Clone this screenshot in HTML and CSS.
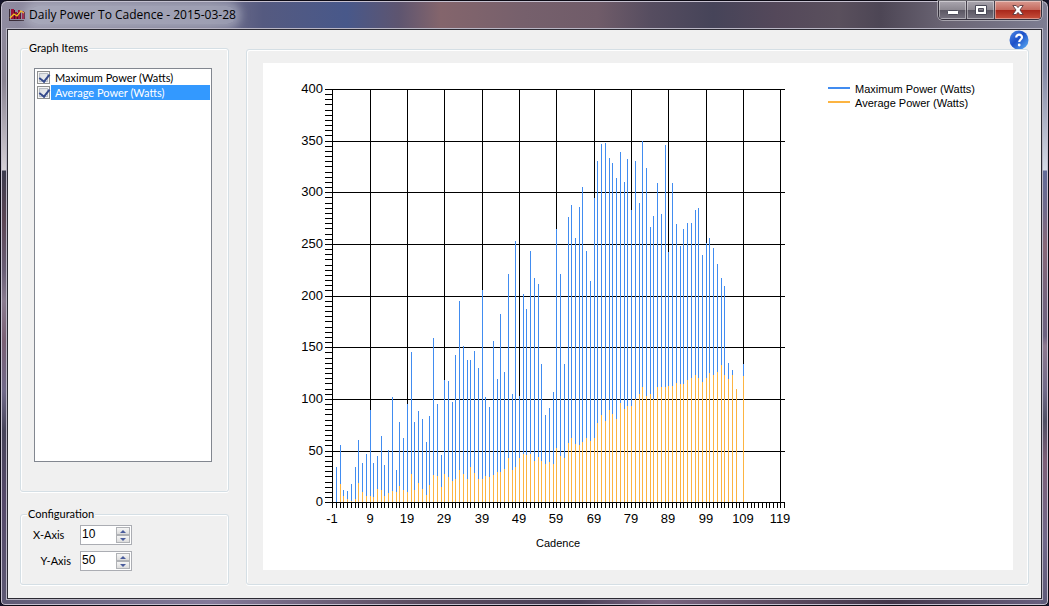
FILE: index.html
```html
<!DOCTYPE html>
<html lang="en">
<head>
    <meta charset="UTF-8">
    <title>Daily Power To Cadence - 2015-03-28</title>
    <link rel="stylesheet" href="styles.css">
</head>
<body>
    <div class="window">
        <header class="titlebar">
            <svg class="app-icon" width="16" height="16" viewBox="0 0 16 16" shape-rendering="crispEdges">
                <path d="M0 2h1v11h14v1H0z" fill="#3a2c38"/>
                <path d="M2 2h3v10H2zM6 5h2v7H6zM9 3h2v9H9zM13 4h2v8h-2z" fill="#9c1038"/>
                <path d="M5 3h1v9H5zM8 6h1v6H8zM11 4h1v8h-1zM15 5h1v7h-1z" fill="#4a0c20"/>
                <path d="M1 11l4-4 3 2 4-5 3 2" fill="none" stroke="#f4c020" stroke-width="1.300" shape-rendering="auto"/>
            </svg>
            <h1 class="title">Daily Power To Cadence - 2015-03-28</h1>
            <div class="controls">
                <button class="control" aria-label="Minimize">
                    <svg width="12" height="12" viewBox="0 0 12 12"><rect x="0.5" y="6.500" width="11" height="4" rx="1" fill="#fff" stroke="#4a4a58"/></svg>
                </button>
                <button class="control" aria-label="Maximize">
                    <svg width="12" height="12" viewBox="0 0 12 12"><path d="M.5 1.500h11v9H.5zM3.500 4.500v3h5v-3z" fill="#fff" stroke="#4a4a58" fill-rule="evenodd"/></svg>
                </button>
                <button class="control control-close" aria-label="Close">
                    <svg width="12" height="12" viewBox="0 0 12 12"><path d="M.8 1.500h3.400L6 3.600l1.800-2.100h3.400L8 6l3.200 4.500H7.800L6 8.400l-1.800 2.100H.8L4 6z" fill="#fff" stroke="#5b3a40" stroke-width=".9"/></svg>
                </button>
            </div>
        </header>

        <main class="client">
            <div class="sidebar">
                <fieldset class="group group-items">
                    <legend>Graph Items</legend>
                    <div class="list">
                        <label class="list-item"><input type="checkbox" checked><span>Maximum Power (Watts)</span></label>
                        <label class="list-item selected"><input type="checkbox" checked><span>Average Power (Watts)</span></label>
                    </div>
                </fieldset>

                <fieldset class="group group-config">
                    <legend>Configuration</legend>
                    <div class="field">
                        <label for="xAxis">X-Axis</label>
                        <div class="spinner">
                            <input type="number" id="xAxis" value="10">
                            <div class="spinner-buttons">
                                <button class="up" aria-label="Increase X-Axis" onclick="xAxis.stepUp()"></button>
                                <button class="down" aria-label="Decrease X-Axis" onclick="xAxis.stepDown()"></button>
                            </div>
                        </div>
                    </div>
                    <div class="field field-end">
                        <label for="yAxis">Y-Axis</label>
                        <div class="spinner">
                            <input type="number" id="yAxis" value="50">
                            <div class="spinner-buttons">
                                <button class="up" aria-label="Increase Y-Axis" onclick="yAxis.stepUp()"></button>
                                <button class="down" aria-label="Decrease Y-Axis" onclick="yAxis.stepDown()"></button>
                            </div>
                        </div>
                    </div>
                </fieldset>
            </div>

            <div class="content">
                <button class="help" aria-label="Help">
                    <svg width="20" height="20" viewBox="0 0 20 20">
                        <defs>
                            <linearGradient id="helpFill" x1="0" y1="0" x2="1" y2="1">
                                <stop offset="0" stop-color="#4d8ae8"/>
                                <stop offset=".45" stop-color="#1c50c8"/>
                                <stop offset="1" stop-color="#62b4f8"/>
                            </linearGradient>
                        </defs>
                        <circle cx="10" cy="10" r="9.500" fill="url(#helpFill)"/>
                        <path d="M7.200 7.400C7.200 3.700 13.100 3.800 13 7.300 13 9.500 10.200 9.600 10.200 12.100" fill="none" stroke="#fff" stroke-width="2.200"/>
                        <circle cx="10.200" cy="15" r="1.400" fill="#fff"/>
                    </svg>
                </button>
                <div class="panel">
                    <svg class="chart" id="chart" viewBox="0 0 750 507" shape-rendering="crispEdges" role="img" aria-label="Power by cadence"></svg>
                </div>
            </div>
        </main>
    </div>
    <script src="chart.js"></script>
</body>
</html>
```
FILE: styles.css
```css
* {
    box-sizing: border-box;
}
body {
    margin: 0;
    min-height: 100vh;
    display: flex;
    background: #14142a;
    font-family: Lato, "Liberation Sans", Arial, sans-serif;
    font-size: 11px;
    line-height: 16px;
    color: #000;
}
button {
    padding: 0;
    border: none;
    background: none;
}

/* window frame */
.window {
    flex: 1;
    display: flex;
    flex-direction: column;
    padding: 0 6px 6px;
    border: 1px solid #0c0a14;
    border-radius: 7px 7px 5px 5px;
    box-shadow: inset 0 0 0 1px #c5c0cf;
    background:
        linear-gradient(90deg, #8f8ba0 0, #77758f 20%, #555a80 25%, #48588a 33%, #5e5570 38%, #84656c 42%, #76606c 50%, #705c69 57%, #564d60 62%, #464459 68%, #54485a 74%, #5a505d 80%, #4d4655 84%, #6a6473 90%, #7d7d92 100%) top / 100% 29px no-repeat,
        linear-gradient(180deg, #8f8ba0 0, #8a8492 80px, #d5d0d6 169px, #3c3c4e 170px, #5c4654 220px, #6a5f76 270px, #8a7c90 300px, #7a6074 340px, #716a8a 390px, #47445a 430px, #55496a 500px, #5e5a74 100%) left / 7px 100% no-repeat,
        linear-gradient(180deg, #7d7d92 0, #858aa5 70px, #d5dae6 169px, #636c98 170px, #706a8a 210px, #886878 245px, #74647e 300px, #6c6280 335px, #8e7a90 345px, #706a88 390px, #505064 420px, #7e6078 460px, #70688a 540px, #5e5a78 100%) right / 7px 100% no-repeat,
        linear-gradient(90deg, #5e5a74, #857a9a 20%, #5c4c60 40%, #4b4058 55%, #7a6480 63%, #5e4c62 74%, #44364a 85%, #6a6080);
}
.titlebar {
    flex: none;
    height: 28px;
    display: flex;
    align-items: center;
    gap: 4px;
    padding-left: 2px;
}
.app-icon {
    flex: none;
}
.title {
    margin: 0;
    font: 12px/18px "Open Sans", "Noto Sans", sans-serif;
    border-radius: 9px;
    background: rgba(190, 193, 208, .55);
    box-shadow: 0 0 8px 5px rgba(190, 193, 208, .55);
    white-space: nowrap;
}
.controls {
    display: flex;
    align-self: flex-start;
    margin-left: auto;
    border: 1px solid #34303c;
    border-top: none;
    border-radius: 0 0 5px 5px;
    box-shadow: 0 0 0 1px rgba(255, 255, 255, .4);
    overflow: hidden;
}
.control {
    width: 28px;
    height: 18px;
    display: flex;
    align-items: center;
    justify-content: center;
    border-right: 1px solid #45404c;
    box-shadow: inset 0 0 0 1px rgba(255, 255, 255, .4);
    background: linear-gradient(#aaa6af 0, #8b8790 50%, #5a5662 50%, #777380 100%);
}
.control-close {
    width: 46px;
    border-right: none;
    background: linear-gradient(#d99a90 0, #c4685c 50%, #a8261a 50%, #c8503c 100%);
}

/* client area */
.client {
    flex: 1;
    display: grid;
    grid-template-columns: 209px 1fr;
    gap: 17px;
    padding: 0 12px 13px;
    border: 1px solid #2b2a33;
    box-shadow: 0 0 0 1px #b9b6c4;
    background: #f0f0f0;
}
.sidebar {
    display: flex;
    flex-direction: column;
    gap: 14px;
    padding-top: 10px;
}
.group,
.panel {
    margin: 0;
    border: 1px solid #d5dfe5;
    border-radius: 3px;
    box-shadow: inset 1px 1px 0 #fff, inset -1px 0 0 #fff, 0 1px 0 #fff;
}
.group {
    min-width: 0;
    padding: 0;
    display: flex;
    flex-direction: column;
}
.group legend {
    margin-left: -6px;
    padding: 0 1px;
    background: #f0f0f0;
}
.group-items {
    flex: 1;
    padding: 12px 16px 29px 13px;
}
.list {
    flex: 1;
    padding: 1px;
    border: 1px solid #828790;
    background: #fff;
}
.list-item {
    display: flex;
    align-items: center;
    gap: 1px;
    height: 15px;
    padding-left: 1px;
}
.list-item input {
    appearance: none;
    flex: none;
    width: 13px;
    height: 13px;
    margin: 0;
    border: 1px solid #8e8f8f;
    box-shadow: inset 0 0 0 1px #f4f4f4, inset 0 0 0 2px #b9bec5;
    background: linear-gradient(135deg, #d5d9de, #f6f6f6);
}
.list-item input:checked::before {
    content: "";
    display: block;
    width: 5px;
    height: 8px;
    margin: 0 0 0 3px;
    border: solid #354a8c;
    border-width: 0 2px 2px 0;
    transform: rotate(38deg);
}
.list-item span {
    flex: 1;
    padding-left: 4px;
    line-height: 15px;
}
.list-item.selected span {
    background: #3399ff;
    color: #fff;
}

/* configuration */
.group-config {
    padding: 3px 0 13px 12px;
}
.field {
    display: flex;
    align-items: center;
    gap: 9px;
}
.field + .field {
    margin-top: 6px;
}
.field label {
    width: 38px;
}
.field-end label {
    text-align: right;
}
.spinner {
    display: flex;
    width: 52px;
    height: 20px;
    padding: 1px;
    border: 1px solid #abadb3;
    background: #fff;
}
.spinner input {
    appearance: textfield;
    flex: 1;
    min-width: 0;
    height: 14px;
    padding: 0;
    border: none;
    outline: none;
    background: none;
    font: 12px/14px "Liberation Sans", Arial, sans-serif;
}
.spinner input::-webkit-inner-spin-button {
    appearance: none;
    margin: 0;
}
.spinner-buttons {
    display: flex;
    flex-direction: column;
    width: 14px;
}
.spinner-buttons button {
    flex: 1;
    display: flex;
    align-items: center;
    justify-content: center;
    border: 1px solid #b0b2b6;
    background: linear-gradient(#f6f6f6, #dcdcdc);
}
.spinner-buttons button::before {
    content: "";
    border: 3px solid transparent;
}
.spinner-buttons .up::before {
    border-top: none;
    border-bottom-color: #4a5c9c;
}
.spinner-buttons .down::before {
    border-bottom: none;
    border-top-color: #4a5c9c;
}

/* chart */
.content {
    display: flex;
    flex-direction: column;
    min-width: 0;
}
.help {
    align-self: flex-end;
    height: 19px;
}
.help svg {
    display: block;
}
.panel {
    flex: 1;
    display: flex;
    padding: 13px 15px 14px 16px;
}
.chart {
    flex: 1;
    min-width: 0;
    background: #fff;
    font-family: "Liberation Sans", Arial, sans-serif;
    font-size: 13px;
}
.chart .grid {
    fill: #000;
}
.chart .max {
    fill: #418cf0;
}
.chart .avg {
    fill: #fcb441;
}
.chart .end {
    text-anchor: end;
}
.chart .middle {
    text-anchor: middle;
}
.chart .small {
    font-size: 11px;
}
```
FILE: chart.js
```js
// index = cadence, value = watts
const maxPower = [
    34, 55.5, 12, 11, 17.5, 34, 60, 38, 46.5, 89.5,
    38, 45, 64, 36, 51, 102, 31, 78, 62, 95,
    145.5, 78, 88.5, 81, 58.5, 83.5, 159, 95, 46, 118.5,
    117.5, 97, 142.5, 195, 151.5, 138, 138, 146.5, 130, 205.5,
    102, 92.5, 156, 119.5, 182.5, 126, 221, 105, 253, 103,
    202, 187, 243.5, 217.5, 211.5, 134, 84.5, 91, 107, 264,
    221, 134, 276, 288, 256, 286, 305.5, 243.5, 214.5, 294,
    330.5, 347, 348, 333.5, 328.5, 314, 338.5, 310, 332.5, 283,
    330.5, 290, 350, 323, 266.5, 277, 308.5, 279, 346, 242.5,
    309, 269.5, 248, 264.5, 270.5, 270.5, 283, 285, 239.5, 251,
    256, 246, 231, 217, 209.5, 135, 128, 0, 0, 134
];
const avgPower = [
    0, 17.5, 6, 3, 1, 3, 19, 10, 6, 6,
    5, 12.5, 12, 6, 9, 11, 10, 16, 12, 10,
    27.5, 12, 19, 13, 7, 17, 26, 25.5, 15, 27.5,
    24.5, 20.5, 22.5, 31.5, 27.5, 22.5, 34, 28.5, 22.5, 22.5,
    25.5, 24.5, 26.5, 29, 29.5, 32.5, 43, 31.5, 34, 43,
    47, 46, 47, 40, 43.5, 40, 37, 39, 37, 52.5,
    45, 43, 57.5, 62.5, 56.5, 55.5, 58.5, 62.5, 59.5, 62.5,
    77, 84.5, 79, 89.5, 85.5, 80.5, 96, 90.5, 93.5, 93.5,
    100, 105, 112, 103, 105, 100, 112, 112, 112, 112.5,
    112.5, 115.5, 114.5, 114.5, 118.5, 120.5, 123, 120.5, 116.5, 120.5,
    125, 123, 126, 133, 123, 119.5, 123, 110, 0, 122.5
];

const svg = document.getElementById('chart');
const xStep = Number(document.getElementById('xAxis').value);
const yStep = Number(document.getElementById('yAxis').value);

function add(name, attrs, text) {
    const el = document.createElementNS('http://www.w3.org/2000/svg', name);
    for (const key in attrs) el.setAttribute(key, attrs[key]);
    if (text !== undefined) el.textContent = text;
    svg.appendChild(el);
}

function rect(x, y, width, height, cls) {
    add('rect', { x, y, width, height, class: cls });
}

const xPos = n => Math.floor(69.7 + (n + 1) * 3.7355);
const yPos = w => Math.floor(439.75 - w * 1.0333);

const left = xPos(-1);
const right = xPos(120);
const top0 = yPos(400);
const bottom = yPos(0);

// grid lines and axis labels
for (let w = 0; w <= 400; w += yStep) {
    rect(left - 7, yPos(w), right - left + 8, 1, 'grid');
    add('text', { x: left - 9, y: yPos(w) + 4, class: 'end' }, w);
}
for (let n = -1; n <= 120; n += xStep) {
    rect(xPos(n), top0, 1, bottom - top0 + 1, 'grid');
    add('text', { x: xPos(n), y: 460, class: 'middle' }, n);
}

// minor ticks
for (let w = 0; w < 400; w += 5) rect(left - 7, yPos(w), 7, 1, 'grid');
for (let n = -1; n <= 120; n++) rect(xPos(n), bottom, 1, 6, 'grid');

// bars
maxPower.forEach((w, n) => {
    if (w) rect(xPos(n), yPos(w), 1, bottom - yPos(w), 'max');
});
avgPower.forEach((w, n) => {
    if (w) rect(xPos(n), yPos(w), 1, bottom - yPos(w), 'avg');
});

add('text', { x: 295, y: 484, class: 'small middle' }, 'Cadence');

// legend
rect(565, 24, 22, 2, 'max');
add('text', { x: 592, y: 30, class: 'small' }, 'Maximum Power (Watts)');
rect(565, 38, 22, 2, 'avg');
add('text', { x: 592, y: 44, class: 'small' }, 'Average Power (Watts)');
```
